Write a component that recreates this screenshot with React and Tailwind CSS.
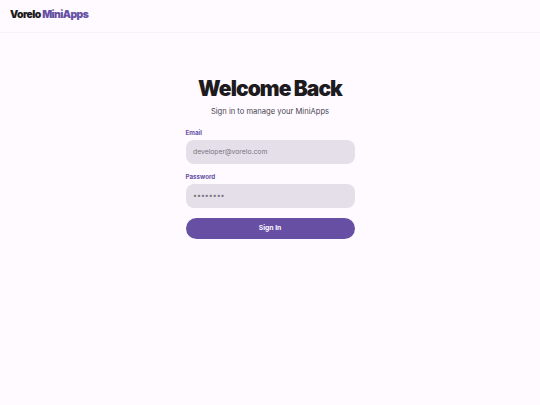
export default function App() {
  return (
    <div className="min-h-[405px] bg-[#fefaff] flex flex-col" style={{ fontFamily: 'Inter, sans-serif' }}>
      <header className="h-[33px] border-b border-[#f7f2f9] flex items-center px-[10px] pb-[1px]">
        <span className="text-[10.4px] font-black tracking-[-0.055em] text-[#1d1b20] leading-none">
          Vorelo <span className="text-[#6750a4]">MiniApps</span>
        </span>
      </header>
      <main className="flex flex-col items-center pt-[42px]">
        <h1 className="text-[21px] leading-[28px] font-black tracking-[-0.045em] text-[#1d1b20]">Welcome Back</h1>
        <p className="mt-[3px] text-[7.6px] leading-[12px] text-[#49454f]">Sign in to manage your MiniApps</p>
        <form className="w-[169px] mt-[11px] flex flex-col">
          <label className="text-[6.2px] leading-[8px] font-bold text-[#6750a4]">Email</label>
          <div className="mt-[3px] h-[24px] rounded-[8px] bg-[#e5dfea] flex items-center px-[7.5px] text-[6.8px] text-[#79747e]">developer@vorelo.com</div>
          <label className="mt-[9px] text-[6.2px] leading-[8px] font-bold text-[#6750a4]">Password</label>
          <div className="mt-[3px] h-[24px] rounded-[8px] bg-[#e5dfea] flex items-center px-[7.5px] text-[7px] text-[#79747e]">••••••••</div>
          <button type="button" className="mt-[10px] h-[21px] rounded-full bg-[#6750a4] text-[#fdf8ff] text-[6.8px] font-bold">Sign In</button>
        </form>
      </main>
    </div>
  );
}
